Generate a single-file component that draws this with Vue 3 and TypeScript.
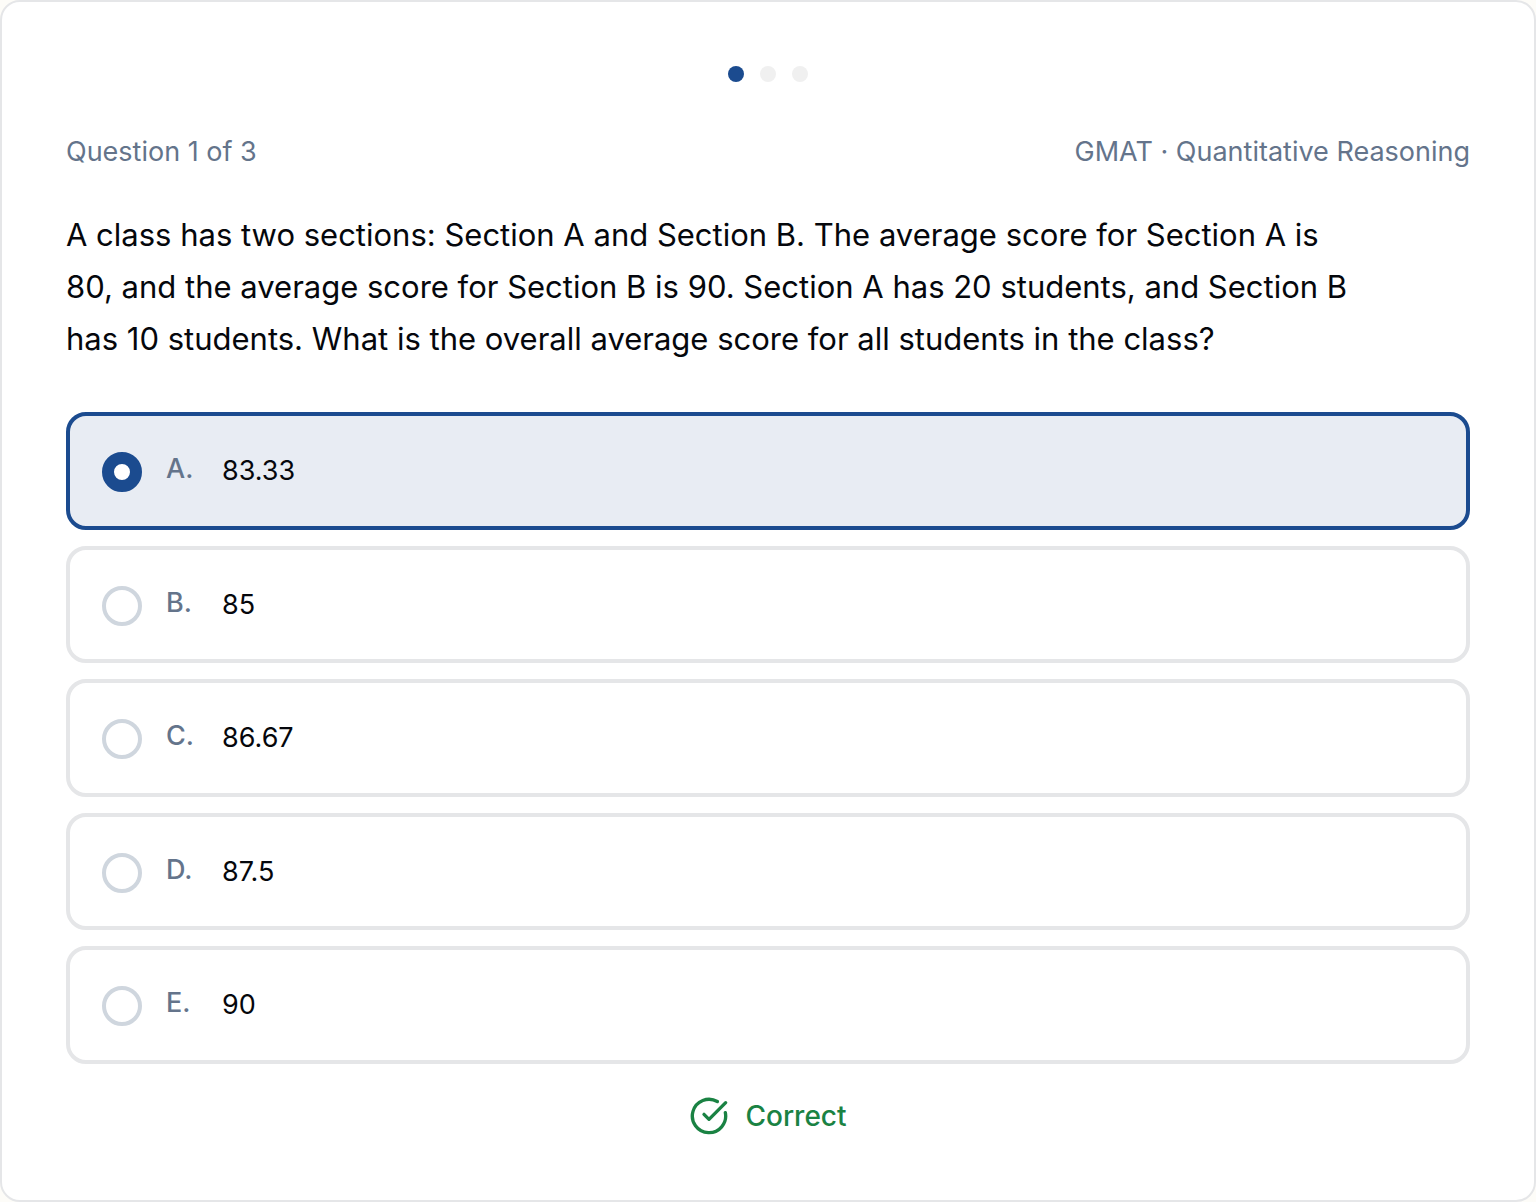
<script setup lang="ts">
import { ref } from 'vue'

interface Option {
  letter: string
  text: string
}

const total = 3
const current = 1
const answer = 'A'
const selected = ref<string>('A')

const options: Option[] = [
  { letter: 'A', text: '83.33' },
  { letter: 'B', text: '85' },
  { letter: 'C', text: '86.67' },
  { letter: 'D', text: '87.5' },
  { letter: 'E', text: '90' },
]
</script>

<template>
  <main class="card">
    <div class="dots" aria-hidden="true">
      <span v-for="n in total" :key="n" class="dot" :class="{ active: n === current }"></span>
    </div>

    <header class="meta">
      <span>Question {{ current }} of {{ total }}</span>
      <span>GMAT · Quantitative Reasoning</span>
    </header>

    <p id="question" class="question">
      A class has two sections: Section A and Section B. The average score for Section A is
      80, and the average score for Section B is 90. Section A has 20 students, and Section B
      has 10 students. What is the overall average score for all students in the class?
    </p>

    <div class="options" role="radiogroup" aria-labelledby="question">
      <label
        v-for="o in options"
        :key="o.letter"
        class="option"
        :class="{ selected: selected === o.letter }"
        :for="'option-' + o.letter"
      >
        <input
          :id="'option-' + o.letter"
          v-model="selected"
          class="radio"
          type="radio"
          name="answer"
          :value="o.letter"
        />
        <span class="letter">{{ o.letter }}.</span>
        <span class="value">{{ o.text }}</span>
      </label>
    </div>

    <p class="result" :class="{ hidden: selected !== answer }" role="status">
      <svg class="check" viewBox="0 0 24 24" aria-hidden="true">
        <path d="M21.801 10A10 10 0 1 1 17 3.335" />
        <path d="m9 11 3 3L22 4" />
      </svg>
      <span>Correct</span>
    </p>
  </main>
</template>

<style>
body {
  margin: 0;
  background: #fdfcf8;
}
</style>

<style scoped>
.card {
  box-sizing: border-box;
  display: flex;
  flex-direction: column;
  min-height: 100vh;
  padding: 64px;
  border: 2px solid #e5e6e8;
  border-radius: 20px;
  background: #fff;
  color: #05070c;
  font-family: Inter, "Liberation Sans", sans-serif;
  font-weight: 400;
}

.dots {
  display: flex;
  justify-content: center;
  gap: 16px;
  margin-bottom: 48px;
}

.dot {
  width: 16px;
  height: 16px;
  border-radius: 50%;
  background: #f0f0f0;
}

.dot.active {
  background: #1b4b8f;
}

.meta {
  display: flex;
  justify-content: space-between;
  margin-bottom: 35px;
  color: #64748b;
  font-size: 27px;
  line-height: 44px;
}

.question {
  max-width: 1300px;
  margin: 0 0 47px;
  font-size: 31px;
  line-height: 52px;
}

.options {
  display: grid;
  flex: 1;
  grid-auto-rows: 1fr;
  gap: 16px;
}

.option {
  box-sizing: border-box;
  display: flex;
  align-items: flex-start;
  gap: 24px;
  padding: 32px;
  border: 4px solid #e5e6e8;
  border-radius: 20px;
  cursor: pointer;
}

.option.selected {
  border-color: #1b4b8f;
  background: #e8ecf3;
}

.radio {
  box-sizing: border-box;
  flex: none;
  width: 40px;
  height: 40px;
  margin: 4px 0 0;
  border: 4px solid #cfd6de;
  border-radius: 50%;
  background: #fff;
  appearance: none;
}

.radio:checked {
  border: 12px solid #1b4b8f;
}

.letter {
  width: 32px;
  color: #64748b;
  font-size: 27px;
  font-weight: 500;
  line-height: 42px;
}

.value {
  font-size: 27px;
  line-height: 45px;
}

.result {
  display: flex;
  align-items: center;
  justify-content: center;
  gap: 16px;
  margin: 32px 0 0;
  color: #1a8243;
  font-size: 28px;
  font-weight: 500;
  line-height: 40px;
}

.result.hidden {
  visibility: hidden;
}

.check {
  width: 40px;
  height: 40px;
  fill: none;
  stroke: currentColor;
  stroke-width: 2;
  stroke-linecap: round;
  stroke-linejoin: round;
}
</style>
